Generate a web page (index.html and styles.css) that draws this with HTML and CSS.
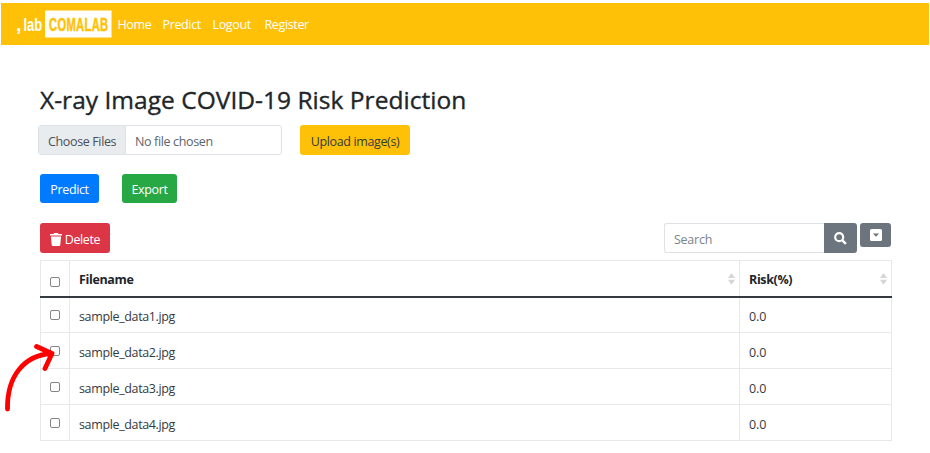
FILE: index.html
```html
<!DOCTYPE html>
<html lang="en">
<head>
<meta charset="utf-8">
<title>COMALAB</title>
<link rel="stylesheet" href="styles.css">
</head>
<body>
<nav class="navbar">
  <a class="brand" aria-label="COMALAB">
    <svg width="96" height="28" viewBox="0 0 96 28">
      <rect x="29" y="0.5" width="66.5" height="27" fill="#fff"/>
      <text class="logo-text" transform="translate(0 21) scale(1.1 1)" fill="#fff">,</text>
      <text class="logo-text light" transform="translate(7.500 21) scale(.74 1)" fill="#fff">lab</text>
      <text class="logo-text mark" transform="translate(33 20.500) scale(.64 1)" fill="#ffc107" stroke="#ffc107">COMALAB</text>
    </svg>
  </a>
  <a class="link home">Home</a><a class="link pred">Predict</a><a class="link logout">Logout</a><a class="link reg">Register</a>
</nav>
<main>
  <h1>X-ray Image COVID-19 Risk Prediction</h1>
  <div class="row upload-row">
    <div class="file"><span class="choose">Choose Files</span><span class="chosen">No file chosen</span></div>
    <button class="btn yellow">Upload image(s)</button>
  </div>
  <div class="row action-row">
    <button class="btn blue">Predict</button>
    <button class="btn green">Export</button>
  </div>
  <div class="row tools">
    <button class="btn red"><svg width="12" height="13" viewBox="0 0 12 13" fill="#fff"><path d="M0 1h3.5L4.2 0h3.6l.7 1H12v1.6H0zM.9 3.5h10.2l-.8 8.3q-.1 1.2-1.2 1.2H2.9q-1.1 0-1.2-1.2z"/></svg><span>Delete</span></button>
    <div class="search"><span>Search</span></div>
    <button class="search-btn" aria-label="Search"><svg width="13" height="13" viewBox="0 0 13 13" fill="none" stroke="#fff"><circle cx="5.2" cy="5.2" r="4" stroke-width="2.2"/><path d="M8.3 8.3l3.6 3.6" stroke-width="2.5"/></svg></button>
    <button class="toggle" aria-label="Columns"><svg width="12" height="12" viewBox="0 0 12 12"><rect width="12" height="12" rx="1.5" fill="#fff"/><path d="M2.9 4.5h6.2L6 7.7z" fill="#6c757d"/></svg></button>
  </div>
  <table>
    <colgroup><col class="c1"><col class="c2"><col class="c3"></colgroup>
    <thead><tr>
      <th class="check"><i class="box head"></i></th>
      <th><div class="head-cell"><span>Filename</span><svg width="7" height="12" viewBox="0 0 7 12" fill="#d5d5d5"><path d="M3.5 0L7 5H0zM0 6.7h7L3.5 11.7z"/></svg></div></th>
      <th><div class="head-cell"><span>Risk(%)</span><svg width="7" height="12" viewBox="0 0 7 12" fill="#d5d5d5"><path d="M3.5 0L7 5H0zM0 6.7h7L3.5 11.7z"/></svg></div></th>
    </tr></thead>
    <tbody>
      <tr><td class="check"><i class="box"></i></td><td>sample_data1.jpg</td><td class="num">0.0</td></tr>
      <tr><td class="check"><i class="box"></i></td><td>sample_data2.jpg</td><td class="num">0.0</td></tr>
      <tr><td class="check"><i class="box"></i></td><td>sample_data3.jpg</td><td class="num">0.0</td></tr>
      <tr><td class="check"><i class="box"></i></td><td>sample_data4.jpg</td><td class="num">0.0</td></tr>
    </tbody>
  </table>
</main>
<svg class="arrow" width="62" height="75" viewBox="0 0 62 75" fill="none" stroke="#f00" stroke-width="4.8" stroke-linecap="round" stroke-linejoin="round"><path d="M7.5 69C7 36 24 15.500 51 13.500M36.500 6.500L52 13.500L45 28.500"/></svg>
</body>
</html>
```
FILE: styles.css
```css
* { box-sizing: border-box; }
body {
  margin: 0;
  width: 930px;
  height: 453px;
  overflow: hidden;
  position: relative;
  background: #fff;
  color: #212529;
  font: 12.5px/19px "Open Sans", "Noto Sans", sans-serif;
  letter-spacing: -0.36px;
}
.navbar {
  margin: 0 1px;
  border-top: 3px solid #fff;
  height: 45px;
  background: #ffc107;
  display: flex;
  align-items: center;
  padding-left: 15px;
  color: #fff;
}
.brand { display: flex; margin-right: 5.5px; }
.logo-text { font: bold 17.5px "Liberation Sans", sans-serif; letter-spacing: 0; }
.mark { letter-spacing: 0.5px; stroke-width: 0.5px; }
.link { white-space: nowrap; }
.home { width: 45px; }
.pred { width: 50px; }
.logout { width: 52px; }
main { padding: 38px 39px 0 40px; }
h1 {
  margin: 0;
  height: 34px;
  font-size: 24.5px;
  line-height: 33px;
  font-weight: 500;
  letter-spacing: 0.03px;
  -webkit-text-stroke: 0.35px #212529;
  white-space: nowrap;
}
.row { display: flex; }
.upload-row { margin: 8px 0 0 -2px; height: 30px; gap: 18px; }
.file {
  width: 244px;
  height: 30px;
  border: 1px solid #dee2e6;
  border-radius: 3px;
  display: flex;
  line-height: 31px;
  color: #495057;
  overflow: hidden;
  white-space: nowrap;
}
.choose { width: 87px; padding-left: 9px; background: #e9ecef; border-right: 1px solid #dee2e6; }
.chosen { padding-left: 9px; color: #5c646b; }
.btn {
  border: 0;
  border-radius: 3px;
  padding: 1px 0 0;
  height: 29px;
  font: inherit;
  letter-spacing: inherit;
  color: #fff;
  white-space: nowrap;
  display: flex;
  align-items: center;
  justify-content: center;
}
.yellow { width: 110px; height: 30px; padding-top: 2px; background: #ffc107; color: #343a40; }
.action-row { margin-top: 19px; gap: 23px; }
.blue { width: 59px; background: #007bff; }
.green { width: 55px; background: #28a745; }
.tools { margin-top: 20px; height: 30px; }
.red { width: 70px; height: 30px; padding-top: 2px; background: #dc3545; gap: 3px; }
.search {
  margin-left: auto;
  width: 160px;
  height: 30px;
  border: 1px solid #dee2e6;
  border-right: 0;
  border-radius: 3px 0 0 3px;
  padding-left: 9px;
  line-height: 31px;
  letter-spacing: -0.25px;
  color: #7b838a;
}
.search-btn, .toggle {
  border: 0;
  padding: 0;
  background: #6c757d;
  display: flex;
  align-items: center;
  justify-content: center;
}
.search-btn { width: 33px; height: 30px; border-radius: 0 3px 3px 0; }
.toggle { width: 31px; height: 24px; margin-left: 3px; border-radius: 3px; }
table {
  margin-top: 7px;
  width: 852px;
  table-layout: fixed;
  border-collapse: collapse;
}
.c1 { width: 29px; }
.c2 { width: 670px; }
th, td { height: 36px; padding: 3px 0 0 9px; border: 1px solid #e6e9ec; text-align: left; white-space: nowrap; }
th { border-bottom: 2px solid #343a40; }
tbody td { color: #353a3f; }
tbody td.num { letter-spacing: -0.1px; }
th.check, td.check { padding: 0; }
.box { display: block; width: 10px; height: 10px; margin: 0 auto; border: 1px solid #858585; border-radius: 2px; position: relative; background: #fff; }
.box.head { top: 4px; }
.head-cell { display: flex; justify-content: space-between; align-items: center; padding-right: 4px; }
.head-cell svg { position: relative; top: -1px; }
.arrow { position: absolute; left: 0; top: 340px; }
```
